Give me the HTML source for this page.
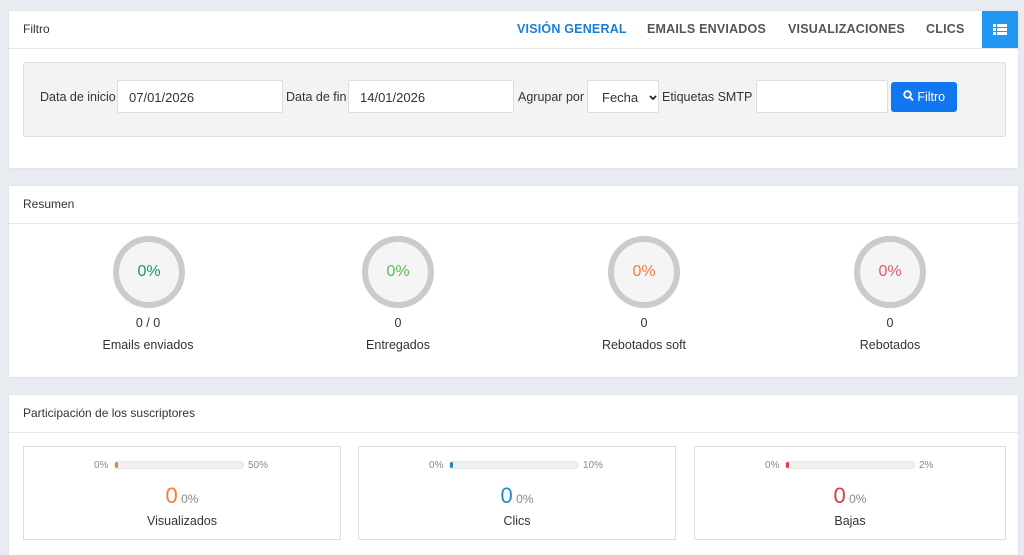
<!DOCTYPE html><html><head><style>
body{margin:0;background:#e9ebf2;font-family:"Liberation Sans",sans-serif;color:#333;width:1024px;height:550px;overflow:hidden;position:relative}
.card{position:absolute;left:9px;width:1009px;background:#fff;box-shadow:0 0 2px rgba(0,0,0,.08)}
.hd{height:37px;border-bottom:1px solid #e5e7ec;font-size:12px;line-height:37px;padding-left:14px;color:#333}
.tab{position:absolute;top:0;font-size:12.5px;font-weight:bold;letter-spacing:.2px;color:#555;line-height:37px}
.panel{position:absolute;left:14px;top:51px;width:981px;height:73px;background:#f3f3f3;border:1px solid #ddd;border-radius:3px}
.lbl{position:absolute;font-size:12.5px;top:27px}
.inp{position:absolute;top:17px;height:33px;background:#fff;border:1px solid #ddd;border-radius:2px;font-size:13px;line-height:33px;padding-left:11px;box-sizing:border-box}
.btn{position:absolute;left:867px;top:19px;width:66px;height:30px;background:#1177f1;border-radius:3px;color:#fff;font-size:12.5px;line-height:30px;text-align:center}
.c{position:absolute;top:50px;width:60px;height:60px;border:6px solid #cbcbcb;border-radius:50%;background:#f5f5f5;text-align:center;line-height:60px;font-size:16px}
.t{position:absolute;width:200px;text-align:center;font-size:12.5px}
.box{position:absolute;top:51px;height:94px;border:1px solid #ddd;box-sizing:border-box;text-align:center}
.bar{position:absolute;top:14px;width:130px;height:8px;background:#f0f0f0;border-radius:4px;border:1px solid #e6e6e6;box-sizing:border-box}
.bar i{position:absolute;left:0;top:0;width:3px;height:6px;border-radius:3px}
.pl{position:absolute;top:13px;font-size:10px;color:#888}
</style></head><body>
<div class="card" style="top:11px;height:157px">
<div class="hd">Filtro</div>
<div class="tab" style="left:508px;color:#1a7fd4">VISIÓN GENERAL</div>
<div class="tab" style="left:638px">EMAILS ENVIADOS</div>
<div class="tab" style="left:779px">VISUALIZACIONES</div>
<div class="tab" style="left:917px">CLICS</div>
<div style="position:absolute;left:973px;top:0;width:36px;height:37px;background:#2196f3">
<svg width="36" height="37"><g fill="#fff"><rect x="11" y="13" width="3" height="3"/><rect x="15" y="13" width="10" height="3"/><rect x="11" y="17" width="3" height="3"/><rect x="15" y="17" width="10" height="3"/><rect x="11" y="21" width="3" height="3"/><rect x="15" y="21" width="10" height="3"/></g></svg></div>
<div class="panel">
<div class="lbl" style="left:16px">Data de inicio</div>
<div class="inp" style="left:93px;width:166px">07/01/2026</div>
<div class="lbl" style="left:262px">Data de fin</div>
<div class="inp" style="left:324px;width:166px">14/01/2026</div>
<div class="lbl" style="left:494px">Agrupar por</div>
<div class="inp" style="left:563px;width:72px;padding-left:14px">Fecha<svg width="8" height="6" style="position:absolute;left:61px;top:14px"><path d="M1 1L4 4L7 1" stroke="#222" stroke-width="1.8" fill="none"/></svg></div>
<div class="lbl" style="left:638px">Etiquetas SMTP</div>
<div class="inp" style="left:732px;width:132px"></div>
<div class="btn"><svg width="11" height="12" style="vertical-align:-1px"><circle cx="4.5" cy="4.5" r="3.3" stroke="#fff" stroke-width="1.8" fill="none"/><path d="M7 7L10 10.5" stroke="#fff" stroke-width="2"/></svg> Filtro</div>
</div></div>
<div class="card" style="top:186px;height:191px">
<div class="hd">Resumen</div>
<div class="c" style="left:104px;color:#1a9a6a">0%</div>
<div class="c" style="left:353px;color:#5cb85c">0%</div>
<div class="c" style="left:599px;color:#f07e3e">0%</div>
<div class="c" style="left:845px;color:#e05a6a">0%</div>
<div class="t" style="left:39px;top:130px">0 / 0</div><div class="t" style="left:39px;top:152px">Emails enviados</div>
<div class="t" style="left:289px;top:130px">0</div><div class="t" style="left:289px;top:152px">Entregados</div>
<div class="t" style="left:535px;top:130px">0</div><div class="t" style="left:535px;top:152px">Rebotados soft</div>
<div class="t" style="left:781px;top:130px">0</div><div class="t" style="left:781px;top:152px">Rebotados</div>
</div>
<div class="card" style="top:395px;height:160px">
<div class="hd">Participación de los suscriptores</div>
<div class="box" style="left:14px;width:318px"><span class="pl" style="left:70px">0%</span><div class="bar" style="left:90px"><i style="background:#f07e3e"></i></div><span class="pl" style="left:224px">50%</span>
<div style="position:absolute;width:100%;top:36px;font-size:22px;color:#f07e3e">0<span style="font-size:12px;color:#888"> 0%</span></div><div style="position:absolute;width:100%;top:67px;font-size:12.5px">Visualizados</div></div>
<div class="box" style="left:349px;width:318px"><span class="pl" style="left:70px">0%</span><div class="bar" style="left:90px"><i style="background:#1a8ccc"></i></div><span class="pl" style="left:224px">10%</span>
<div style="position:absolute;width:100%;top:36px;font-size:22px;color:#1a8ccc">0<span style="font-size:12px;color:#888"> 0%</span></div><div style="position:absolute;width:100%;top:67px;font-size:12.5px">Clics</div></div>
<div class="box" style="left:685px;width:312px"><span class="pl" style="left:70px">0%</span><div class="bar" style="left:90px"><i style="background:#e03a4a"></i></div><span class="pl" style="left:224px">2%</span>
<div style="position:absolute;width:100%;top:36px;font-size:22px;color:#e03a4a">0<span style="font-size:12px;color:#888"> 0%</span></div><div style="position:absolute;width:100%;top:67px;font-size:12.5px">Bajas</div></div>
</div>
</body></html>
